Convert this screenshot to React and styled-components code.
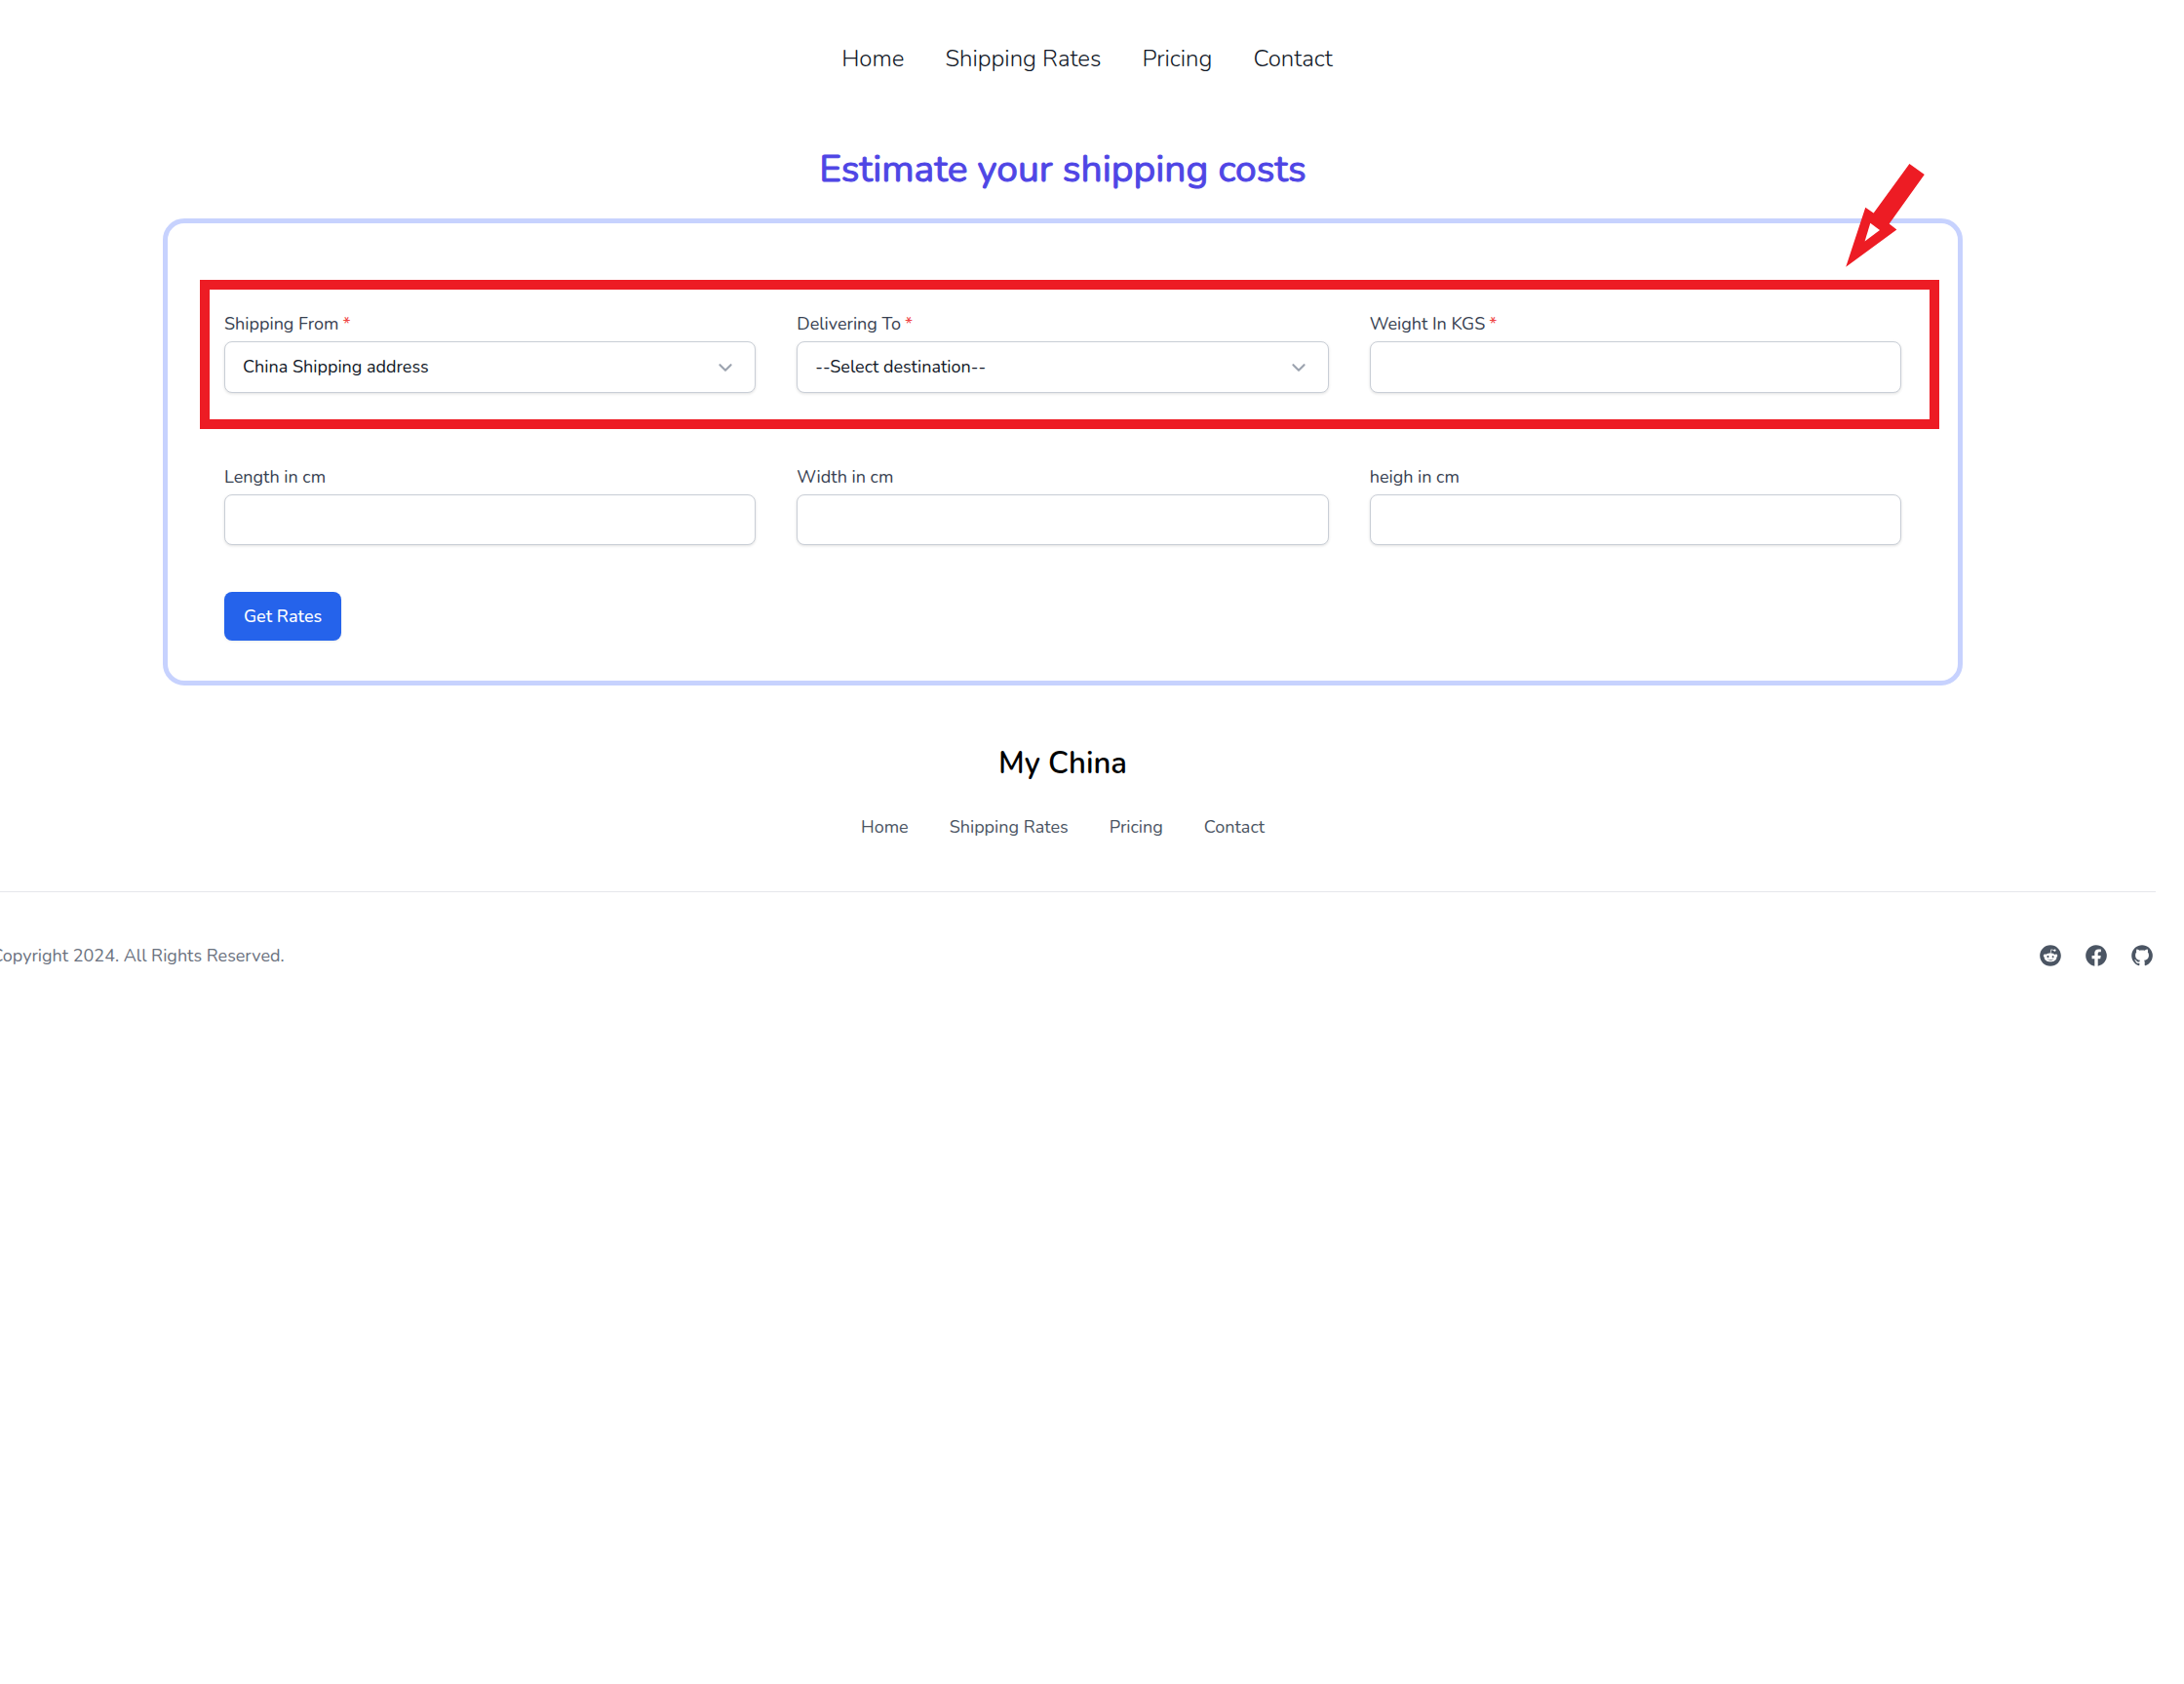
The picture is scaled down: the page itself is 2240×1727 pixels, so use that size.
import React, { useState } from 'react'
import styled, { createGlobalStyle } from 'styled-components'

const GlobalStyle = createGlobalStyle`
  *, *::before, *::after {
    box-sizing: border-box;
  }
  body {
    margin: 0;
    background: #fff;
    font-family: Nunito, Lato, sans-serif;
    font-size: 18px;
    line-height: 24px;
    overflow-x: hidden;
  }
`;

const Page = styled.div`
  margin: 0 29px 0 -31px;
`;

const Nav = styled.nav`
  display: flex;
  justify-content: center;
  gap: 42px;
  padding: 44px 0 44px 50px;
`;

const NavLink = styled.a`
  color: #111827;
  font-size: 24px;
  font-weight: 300;
  line-height: 32px;
  text-decoration: none;
`;

const Title = styled.h1`
  margin: 28px 0 24px;
  color: #4f46e5;
  font-size: 39px;
  font-weight: 400;
  line-height: 52px;
  text-align: center;
  -webkit-text-stroke: 1px #4f46e5;
`;

const Card = styled.form`
  display: flex;
  flex-direction: column;
  align-items: flex-start;
  margin: 0 198px;
  padding: 91px 58px 41px;
  border: 5px solid #c7d2fe;
  border-radius: 22px;
`;

const Row = styled.div`
  position: relative;
  display: grid;
  grid-template-columns: repeat(3, 1fr);
  gap: 42px;
  width: 100%;
  margin-bottom: ${(props) => props.$space}px;
`;

const Highlight = styled.div`
  position: absolute;
  inset: -33px -39px -37px -25px;
  border: 10px solid #ed1c24;
  pointer-events: none;
`;

const Arrow = styled.svg`
  position: absolute;
  top: -152px;
  right: -24px;
  width: 81px;
  height: 106px;
`;

const Field = styled.div`
  display: flex;
  flex-direction: column;
  gap: 6px;
`;

const Label = styled.label`
  color: #374151;
`;

const Required = styled.span`
  margin-left: 4px;
  color: #ef4444;
`;

const Input = styled.input`
  flex: 1;
  width: 100%;
  min-height: 52px;
  padding: 0 18px;
  border: 1px solid #c9ced6;
  border-radius: 8px;
  background: #fff;
  box-shadow: 0 1px 3px rgba(0, 0, 0, 0.12);
  color: #111827;
  font: inherit;
`;

const SelectBox = styled.div`
  position: relative;
`;

const Select = styled(Input)`
  display: block;
  height: 53px;
  padding-bottom: 2px;
  appearance: none;
`;

const Chevron = styled.svg`
  position: absolute;
  top: 13px;
  right: 17px;
  width: 28px;
  height: 28px;
  pointer-events: none;
`;

const Button = styled.button`
  height: 50px;
  padding: 0 20px;
  border: 0;
  border-radius: 8px;
  background: #2563eb;
  box-shadow: 0 1px 3px rgba(0, 0, 0, 0.08);
  color: #fff;
  font: inherit;
  font-weight: 500;
`;

const FooterTop = styled.div`
  display: flex;
  flex-direction: column;
  align-items: center;
  gap: 31px;
  padding: 58px 0 54px;
  border-bottom: 1px solid #e5e7eb;
`;

const Brand = styled.div`
  color: #000;
  font-size: 31px;
  font-weight: 600;
  line-height: 44px;
`;

const FooterLinks = styled.nav`
  display: flex;
  gap: 42px;
`;

const FooterLink = styled.a`
  display: flex;
  color: #4b5563;
  text-decoration: none;
`;

const FooterBottom = styled.div`
  display: flex;
  align-items: center;
  justify-content: space-between;
  padding: 52px 1px 52px 3px;
`;

const Copyright = styled.p`
  margin: 0;
  color: #6b7280;
`;

const Socials = styled.div`
  display: flex;
  gap: 21px;
`;

const links = ['Home', 'Shipping Rates', 'Pricing', 'Contact']

const socials = [
  {
    name: 'Reddit',
    path: 'M12 22C6.47715 22 2 17.5228 2 12C2 6.47715 6.47715 2 12 2C17.5228 2 22 6.47715 22 12C21.9939 17.5203 17.5203 21.9939 12 22ZM6.807 10.543C6.20862 10.5433 5.67102 10.9088 5.45054 11.465C5.23006 12.0213 5.37133 12.6558 5.807 13.066C5.92217 13.1751 6.05463 13.2643 6.199 13.33C6.18644 13.4761 6.18644 13.6229 6.199 13.769C6.199 16.009 8.814 17.831 12.028 17.831C15.242 17.831 17.858 16.009 17.858 13.769C17.8696 13.6229 17.8696 13.4761 17.858 13.33C18.4649 13.0351 18.786 12.3585 18.6305 11.7019C18.475 11.0453 17.8847 10.5844 17.21 10.593H17.157C16.7988 10.6062 16.458 10.7512 16.2 11C15.0625 10.2265 13.7252 9.79927 12.35 9.77L13 6.65L15.138 7.1C15.1931 7.60706 15.621 7.99141 16.131 7.992C16.1674 7.99196 16.2038 7.98995 16.24 7.986C16.7702 7.93278 17.1655 7.47314 17.1389 6.94094C17.1122 6.40873 16.6729 5.991 16.14 5.991C16.1022 5.99191 16.0645 5.99491 16.027 6C15.71 6.03367 15.4281 6.21641 15.268 6.492L12.82 6C12.7983 5.99535 12.7762 5.993 12.754 5.993C12.6094 5.99472 12.4851 6.09583 12.454 6.237L11.706 9.71C10.3138 9.7297 8.95795 10.157 7.806 10.939C7.53601 10.6839 7.17843 10.5422 6.807 10.543ZM12.18 16.524C12.124 16.524 12.067 16.524 12.011 16.524C11.955 16.524 11.898 16.524 11.842 16.524C11.0121 16.5208 10.2054 16.2497 9.542 15.751C9.49626 15.6958 9.47445 15.6246 9.4814 15.5533C9.48834 15.482 9.52348 15.4163 9.579 15.371C9.62737 15.3318 9.68771 15.3102 9.75 15.31C9.81233 15.31 9.87275 15.3315 9.921 15.371C10.4816 15.7818 11.159 16.0022 11.854 16C11.9027 16 11.9513 16 12 16C12.059 16 12.119 16 12.178 16C12.864 16.0011 13.5329 15.7863 14.09 15.386C14.1427 15.3322 14.2147 15.302 14.29 15.302C14.3653 15.302 14.4373 15.3322 14.49 15.386C14.5985 15.4981 14.5962 15.6767 14.485 15.786V15.746C13.8213 16.2481 13.0123 16.5208 12.18 16.523V16.524ZM14.307 14.08H14.291L14.299 14.041C13.8591 14.011 13.4994 13.6789 13.4343 13.2429C13.3691 12.8068 13.6162 12.3842 14.028 12.2269C14.4399 12.0697 14.9058 12.2202 15.1478 12.5887C15.3899 12.9572 15.3429 13.4445 15.035 13.76C14.856 13.9554 14.6059 14.0707 14.341 14.08H14.306H14.307ZM9.67 14C9.11772 14 8.67 13.5523 8.67 13C8.67 12.4477 9.11772 12 9.67 12C10.2223 12 10.67 12.4477 10.67 13C10.67 13.5523 10.2223 14 9.67 14Z',
  },
  {
    name: 'Facebook',
    path: 'M2.00195 12.002C2.00312 16.9214 5.58036 21.1101 10.439 21.881V14.892H7.90195V12.002H10.442V9.80204C10.3284 8.75958 10.6845 7.72064 11.4136 6.96698C12.1427 6.21332 13.1693 5.82306 14.215 5.90204C14.9655 5.91417 15.7141 5.98101 16.455 6.10205V8.56104H15.191C14.7558 8.50405 14.3183 8.64777 14.0017 8.95171C13.6851 9.25566 13.5237 9.68693 13.563 10.124V12.002H16.334L15.891 14.893H13.563V21.881C18.8174 21.0506 22.502 16.2518 21.9475 10.9611C21.3929 5.67041 16.7932 1.73997 11.4808 2.01722C6.16831 2.29447 2.0028 6.68235 2.00195 12.002Z',
  },
  {
    name: 'Github',
    path: 'M12.026 2C7.13295 1.99937 2.96183 5.54799 2.17842 10.3779C1.395 15.2079 4.23061 19.893 8.87302 21.439C9.37302 21.529 9.55202 21.222 9.55202 20.958C9.55202 20.721 9.54402 20.093 9.54102 19.258C6.76602 19.858 6.18002 17.92 6.18002 17.92C5.99733 17.317 5.60459 16.7993 5.07302 16.461C4.17302 15.842 5.14202 15.856 5.14202 15.856C5.78269 15.9438 6.34657 16.3235 6.66902 16.884C6.94195 17.3803 7.40177 17.747 7.94632 17.9026C8.49087 18.0583 9.07503 17.99 9.56902 17.713C9.61544 17.207 9.84055 16.7341 10.204 16.379C7.99002 16.128 5.66202 15.272 5.66202 11.449C5.64973 10.4602 6.01691 9.5043 6.68802 8.778C6.38437 7.91731 6.42013 6.97325 6.78802 6.138C6.78802 6.138 7.62502 5.869 9.53002 7.159C11.1639 6.71101 12.8882 6.71101 14.522 7.159C16.428 5.868 17.264 6.138 17.264 6.138C17.6336 6.97286 17.6694 7.91757 17.364 8.778C18.0376 9.50423 18.4045 10.4626 18.388 11.453C18.388 15.286 16.058 16.128 13.836 16.375C14.3153 16.8651 14.5612 17.5373 14.511 18.221C14.511 19.555 14.499 20.631 14.499 20.958C14.499 21.225 14.677 21.535 15.186 21.437C19.8265 19.8884 22.6591 15.203 21.874 10.3743C21.089 5.54565 16.9181 1.99888 12.026 2Z',
  },
]

function TextField({ id, label, required }) {
  return (
    <Field>
      <Label htmlFor={id}>{label}{required && <Required>*</Required>}</Label>
      <Input id={id} name={id} type="text" />
    </Field>
  )
}

function SelectField({ id, label, options }) {
  const [value, setValue] = useState(options[0]);

  return (
    <Field>
      <Label htmlFor={id}>{label}<Required>*</Required></Label>
      <SelectBox>
        <Select as="select" id={id} name={id} value={value} onChange={(e) => setValue(e.target.value)}>
          {options.map((option) => <option key={option}>{option}</option>)}
        </Select>
        <Chevron viewBox="0 0 20 20" fill="none" stroke="#9ca3af" strokeWidth="1.5" strokeLinecap="round" strokeLinejoin="round">
          <path d="M6 8l4 4 4-4" />
        </Chevron>
      </SelectBox>
    </Field>
  )
}

function App() {
  return (
    <>
      <GlobalStyle />
      <Page>
        <Nav>
          {links.map((link) => <NavLink key={link} href="#">{link}</NavLink>)}
        </Nav>
        <Title>Estimate your shipping costs</Title>
        <Card onSubmit={(e) => e.preventDefault()}>
          <Row $space={74}>
            <SelectField id="from" label="Shipping From" options={['China Shipping address']} />
            <SelectField id="to" label="Delivering To" options={['--Select destination--']} />
            <TextField id="weight" label="Weight In KGS" required />
            <Highlight />
            <Arrow viewBox="160 54 241 317">
              <path fill="#ed1c24" d="M355 54l46 33-108 151 23 18-156 114 60-182 25 17z" />
              <path fill="#fff" d="M235 236l29 21-46 35z" />
            </Arrow>
          </Row>
          <Row $space={48}>
            <TextField id="length" label="Length in cm" />
            <TextField id="width" label="Width in cm" />
            <TextField id="height" label="heigh in cm" />
          </Row>
          <Button type="submit">Get Rates</Button>
        </Card>
        <footer>
          <FooterTop>
            <Brand>My China</Brand>
            <FooterLinks>
              {links.map((link) => <FooterLink key={link} href="#">{link}</FooterLink>)}
            </FooterLinks>
          </FooterTop>
          <FooterBottom>
            <Copyright>© Copyright 2024. All Rights Reserved.</Copyright>
            <Socials>
              {socials.map(({ name, path }) => (
                <FooterLink key={name} href="#" aria-label={name}>
                  <svg width="26" height="26" viewBox="0 0 24 24" fill="currentColor">
                    <path d={path} />
                  </svg>
                </FooterLink>
              ))}
            </Socials>
          </FooterBottom>
        </footer>
      </Page>
    </>
  )
}

export default App
